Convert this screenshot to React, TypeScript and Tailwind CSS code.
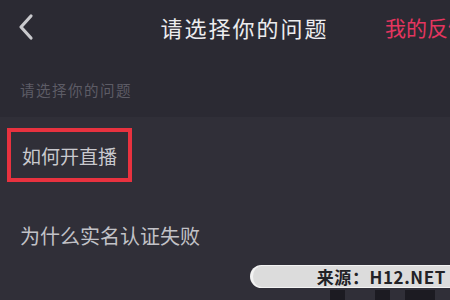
import React from "react";

export default function App() {
  const font = { fontFamily: '"Noto Sans CJK SC", "Noto Sans", sans-serif' };
  return (
    <div className="relative w-[450px] h-[300px] overflow-hidden bg-[#2b2a33]" style={font}>
      {/* header */}
      <div className="relative flex items-center h-[54px]">
        <div className="w-[52px] flex items-center pl-[16px]">
          <svg width="20" height="28" viewBox="0 0 20 28">
            <path d="M15 3 L5 14 L15 25" fill="none" stroke="#c9c9cd" strokeWidth="3.2" strokeLinecap="round" strokeLinejoin="round" />
          </svg>
        </div>
        <div className="flex-1 flex justify-center pl-[52px]">
          <span className="text-[22px] tracking-[2px] text-[#ececee] leading-none whitespace-nowrap">请选择你的问题</span>
        </div>
        <div className="w-[65px] shrink-0 whitespace-nowrap overflow-visible text-[21px] leading-none text-[#e5355f]">我的反馈</div>
      </div>
      {/* subtitle */}
      <div className="h-[63px] flex items-center pl-[20px] pt-[10px]">
        <span className="text-[14.5px] tracking-[1.5px] text-[#5d5c66] leading-none">请选择你的问题</span>
      </div>
      {/* list */}
      <div className="bg-[#302f38] h-[183px] flex flex-col">
        <div className="pt-[11px] pl-[7px]">
          <div className="inline-flex items-center h-[54px] px-[11px] border-[4px] border-[#e8323f]">
            <span className="text-[19px] text-[#c9c9ce] leading-none">如何开直播</span>
          </div>
        </div>
        <div className="pl-[20px] mt-[43px]">
          <span className="text-[20px] text-[#c2c2c7] leading-none">为什么实名认证失败</span>
        </div>
      </div>
      {/* watermark */}
      <div className="absolute left-[250px] top-[265px] w-[210px] h-[23px] rounded-l-full bg-[#dcdcdc] border-l-[3px] border-y border-[#f2f2f2] flex items-center justify-end pr-[14px]">
        <span className="text-[17px] font-semibold tracking-[0.6px] text-[#222226] leading-none whitespace-nowrap" style={{ fontFamily: '"Noto Sans CJK SC", "Liberation Sans", sans-serif' }}>来源：H12.NET</span>
      </div>
      <div className="absolute top-[290px] left-[330px] w-[15px] h-[10px] bg-[#1c1b22]" />
      <div className="absolute top-[290px] left-[375px] w-[15px] h-[10px] bg-[#1c1b22]" />
      <div className="absolute top-[290px] left-[405px] w-[30px] h-[10px] bg-[#1c1b22]" />
    </div>
  );
}
